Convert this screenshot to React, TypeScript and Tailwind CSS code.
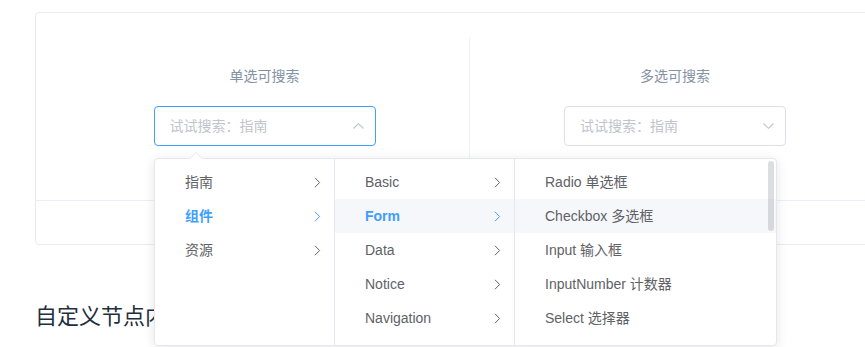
import React from "react"

const font = "font-['Liberation_Sans','Noto_Sans_CJK_SC',sans-serif]"

function Chevron({ className = "" }: { className?: string }) {
  return (
    <svg width="7" height="11" viewBox="0 0 7 11" className={className} fill="none">
      <polyline points="1,0.8 5.6,5.5 1,10.2" stroke="currentColor" strokeWidth="1" />
    </svg>
  )
}

function ArrowUpDown({ up }: { up: boolean }) {
  return (
    <svg width="11" height="6" viewBox="0 0 11 6" fill="none" className="text-[#c0c4cc]">
      <polyline
        points={up ? "0.5,5.5 5.5,0.7 10.5,5.5" : "0.5,0.5 5.5,5.3 10.5,0.5"}
        stroke="currentColor"
        strokeWidth="1.1"
      />
    </svg>
  )
}

function CascaderInput({ focused }: { focused: boolean }) {
  return (
    <div
      className={`mx-auto flex h-10 w-[222px] items-center rounded-[4px] border pl-[15px] pr-[11px] text-left text-sm ${
        focused ? "border-[#409eff]" : "border-[#dcdfe6]"
      }`}
    >
      <span className="flex-1 text-[#c0c4cc]">试试搜索：指南</span>
      <ArrowUpDown up={focused} />
    </div>
  )
}

interface Node {
  label: string
  active?: boolean
  hover?: boolean
  leaf?: boolean
}

function Menu({ nodes, width, last }: { nodes: Node[]; width: string; last?: boolean }) {
  return (
    <div className={`relative h-full overflow-hidden py-1.5 ${width} ${last ? "" : "border-r border-[#e4e7ed]"}`}>
      {nodes.map((n) => (
        <div
          key={n.label}
          className={`relative flex h-[34px] items-center pl-5 pr-[30px] text-sm ${
            n.hover ? "bg-[#f5f7fa]" : ""
          } ${n.active ? "font-bold text-[#409eff]" : "text-[#606266]"}`}
        >
          <span className="px-2.5 whitespace-nowrap">{n.label}</span>
          {!n.leaf && <Chevron className="absolute right-[13px] top-[12px]" />}
        </div>
      ))}
      {last && <div className="absolute right-[2px] top-[2px] h-[70px] w-[6px] rounded-[3px] bg-[rgba(144,147,153,0.3)]" />}
    </div>
  )
}

export default function App() {
  return (
    <div className={`relative h-[347px] w-[865px] overflow-hidden bg-white ${font}`}>
      <div className="pl-[35px] pt-3">
        <div className="w-[870px] rounded-[4px] border border-[#ebebeb]">
          <div className="flex p-6">
            <div className="w-1/2 border-r border-[#eff2f6] py-[30px] text-center">
              <span className="mb-5 block text-sm leading-[19px] text-[#8492a6]">单选可搜索</span>
              <CascaderInput focused />
            </div>
            <div className="w-1/2 py-[30px] text-center">
              <span className="mb-5 block text-sm leading-[19px] text-[#8492a6]">多选可搜索</span>
              <CascaderInput focused={false} />
            </div>
          </div>
          <div className="h-[44px] border-t border-[#eaeefb]" />
        </div>
        <h3 className="mt-[55px] text-[22px] font-normal leading-[33px] text-[#1f2f3d]">自定义节点内容</h3>
      </div>

      {/* cascader dropdown */}
      <div className="absolute left-[154px] top-[158px] h-[188px] rounded-[4px] border border-[#e4e7ed] bg-white shadow-[0_2px_12px_0_rgba(0,0,0,0.1)]">
        <div className="absolute -top-[7px] left-[35px] h-0 w-0 border-x-[6px] border-b-[6px] border-x-transparent border-b-[#e4e7ed]" />
        <div className="absolute -top-[6px] left-[35px] h-0 w-0 border-x-[6px] border-b-[6px] border-x-transparent border-b-white" />
        <div className="flex h-full">
          <Menu
            width="w-[180px]"
            nodes={[{ label: "指南" }, { label: "组件", active: true }, { label: "资源" }]}
          />
          <Menu
            width="w-[180px]"
            nodes={[
              { label: "Basic" },
              { label: "Form", active: true, hover: true },
              { label: "Data" },
              { label: "Notice" },
              { label: "Navigation" },
            ]}
          />
          <Menu
            width="w-[261px]"
            last
            nodes={[
              { label: "Radio 单选框", leaf: true },
              { label: "Checkbox 多选框", leaf: true, hover: true },
              { label: "Input 输入框", leaf: true },
              { label: "InputNumber 计数器", leaf: true },
              { label: "Select 选择器", leaf: true },
              { label: "Cascader 级联选择器", leaf: true },
            ]}
          />
        </div>
      </div>
    </div>
  )
}
